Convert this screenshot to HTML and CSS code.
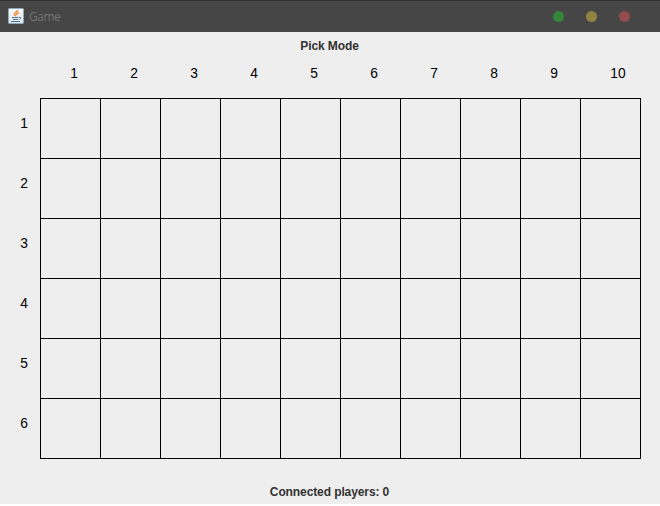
FILE: index.html
```html
<!DOCTYPE html>
<html lang="en">
<head>
<meta charset="utf-8">
<title>Game</title>
<link rel="stylesheet" href="styles.css">
</head>
<body>
<div class="window">
  <header class="titlebar">
    <svg class="app-icon" width="16" height="16" viewBox="0 0 16 16">
      <defs><linearGradient id="tile" x1="0" y1="0" x2="0" y2="1"><stop offset="0" stop-color="#fafafa"/><stop offset="1" stop-color="#dce5ec"/></linearGradient></defs>
      <rect x=".5" y=".5" width="15" height="15" rx="1" fill="url(#tile)" stroke="#8eabc0"/>
      <path d="M9.6 2C9.8 4 6 4.5 6.4 6.2C6.6 7.2 7.6 7.4 7.6 8.2M10.8 4.6C9 5.4 8.2 6 9 7" fill="none" stroke="#ee7d1d" stroke-width="1.3"/>
      <path d="M4 9.5H10.5M5 11.5H10M11 9.3C13.4 8.8 13.2 10.8 11.2 11.3M3 13.5H12" fill="none" stroke="#54738d" stroke-width="1"/>
    </svg>
    <span class="title">Game</span>
    <div class="controls"><i class="dot green"></i><i class="dot yellow"></i><i class="dot red"></i></div>
  </header>
  <main class="content">
    <div class="mode">Pick Mode</div>
    <div class="columns"><span>1</span><span>2</span><span>3</span><span>4</span><span>5</span><span>6</span><span>7</span><span>8</span><span>9</span><span>10</span></div>
    <div class="field">
      <div class="rows"><span>1</span><span>2</span><span>3</span><span>4</span><span>5</span><span>6</span></div>
      <div class="board"></div>
    </div>
    <div class="status">Connected players: 0</div>
  </main>
</div>
<script src="board.js"></script>
</body>
</html>
```
FILE: styles.css
```css
* { box-sizing: border-box; }
body { margin: 0; background: #fff; font-family: "Liberation Sans", Arial, sans-serif; }
.window { width: 660px; height: 504px; background: #eee; overflow: hidden; }
.titlebar { height: 32px; background: #464646; border-top: 1px solid #303030; display: flex; align-items: center; padding: 0 30px 0 8px; }
.app-icon { display: block; margin: -2px 5px 0 0; }
.title { font: 12px/16px "Open Sans", "Noto Sans", sans-serif; letter-spacing: -.5px; color: #747474; }
.controls { margin-left: auto; display: flex; gap: 22px; }
.dot { width: 11px; height: 11px; border-radius: 50%; }
.green { background: #35853a; }
.yellow { background: #908342; }
.red { background: #934b4d; }
.mode, .status { font-size: 12px; line-height: 16px; font-weight: bold; letter-spacing: -.1px; color: #333; text-align: center; }
.mode { height: 33px; padding: 6px 1px 0 0; }
.columns { height: 33px; margin-left: 40px; display: grid; grid-template-columns: repeat(10, 60px); }
.columns span, .rows span { font-size: 15px; line-height: 16px; color: #000; transform: scaleX(.92); }
.columns span { padding-left: 30px; transform-origin: 34px 0; }
.field { display: flex; }
.rows { width: 40px; display: grid; grid-template-rows: repeat(6, 60px); }
.rows span { padding: 17px 0 0 20px; transform-origin: 24px 0; }
.board { width: 601px; height: 361px; display: grid; grid-template: repeat(6, 60px) / repeat(10, 60px); border: solid #000; border-width: 1px 0 0 1px; }
.cell { border: solid #000; border-width: 0 1px 1px 0; }
.status { margin-top: 25px; padding-right: 1px; }
```
FILE: board.js
```js
const board = document.querySelector('.board');
for (let i = 0; i < 60; i++) {
  const cell = document.createElement('div');
  cell.className = 'cell';
  board.appendChild(cell);
}
```
